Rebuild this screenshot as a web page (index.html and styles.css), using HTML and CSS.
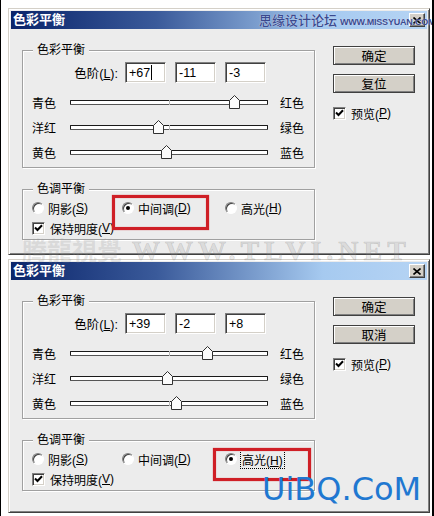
FILE: index.html
```html
<!DOCTYPE html>
<html lang="zh-CN">
<head>
<meta charset="utf-8">
<title>色彩平衡</title>
<link rel="stylesheet" href="styles.css">
</head>
<body>
<div class="page">
  <div class="dialog d1">
    <div class="titlebar">
      <span class="title">色彩平衡</span>
      <span class="close"><svg width="8" height="7" viewBox="0 0 8 7"><path d="M0.5 0.5L7.5 6.5M7.5 0.5L0.5 6.5" stroke="#000" stroke-width="1.6"/></svg></span>
    </div>
    <div class="body">
      <div class="left">
        <div class="group g-color">
          <span class="legend">色彩平衡</span>
          <div class="levels">
            <span class="lv-label">色阶(<u>L</u>):</span>
            <span class="field">+67<i class="caret"></i></span>
            <span class="field">-11</span>
            <span class="field">-3</span>
          </div>
          <div class="slider-row"><span class="sl-l">青色</span><div class="track"><svg class="thumb" style="left:83.5%" viewBox="0 0 11 14"><path d="M0.5 13.5V5.5L5.5 0.5L10.5 5.5V13.5Z" fill="#fbfbfb" stroke="#303030"/></svg></div><span class="sl-r">红色</span></div>
          <div class="slider-row"><span class="sl-l">洋红</span><div class="track"><svg class="thumb" style="left:44.5%" viewBox="0 0 11 14"><path d="M0.5 13.5V5.5L5.5 0.5L10.5 5.5V13.5Z" fill="#fbfbfb" stroke="#303030"/></svg></div><span class="sl-r">绿色</span></div>
          <div class="slider-row"><span class="sl-l">黄色</span><div class="track"><svg class="thumb" style="left:48.5%" viewBox="0 0 11 14"><path d="M0.5 13.5V5.5L5.5 0.5L10.5 5.5V13.5Z" fill="#fbfbfb" stroke="#303030"/></svg></div><span class="sl-r">蓝色</span></div>
        </div>
        <div class="group g-tone">
          <span class="legend">色调平衡</span>
          <div class="radios">
            <span class="radio"><span class="rb"></span>阴影(<u>S</u>)</span>
            <span class="radio on hl hl-1"><span class="rb"></span>中间调(<u>D</u>)</span>
            <span class="radio"><span class="rb"></span>高光(<u>H</u>)</span>
          </div>
          <span class="check"><span class="cb"><svg width="9" height="8" viewBox="0 0 9 8"><path d="M1 3.5L3.5 6L8 1.2" fill="none" stroke="#000" stroke-width="2"/></svg></span>保持明度(<u>V</u>)</span>
        </div>
      </div>
      <div class="right">
        <div class="btn">确定</div>
        <div class="btn">复位</div>
        <span class="check preview"><span class="cb"><svg width="9" height="8" viewBox="0 0 9 8"><path d="M1 3.5L3.5 6L8 1.2" fill="none" stroke="#000" stroke-width="2"/></svg></span>预览(<u>P</u>)</span>
      </div>
    </div>
  </div>

  <div class="dialog d2">
    <div class="titlebar">
      <span class="title">色彩平衡</span>
      <span class="close"><svg width="8" height="7" viewBox="0 0 8 7"><path d="M0.5 0.5L7.5 6.5M7.5 0.5L0.5 6.5" stroke="#000" stroke-width="1.6"/></svg></span>
    </div>
    <div class="body">
      <div class="left">
        <div class="group g-color">
          <span class="legend">色彩平衡</span>
          <div class="levels">
            <span class="lv-label">色阶(<u>L</u>):</span>
            <span class="field">+39</span>
            <span class="field">-2</span>
            <span class="field">+8</span>
          </div>
          <div class="slider-row"><span class="sl-l">青色</span><div class="track"><svg class="thumb" style="left:69.5%" viewBox="0 0 11 14"><path d="M0.5 13.5V5.5L5.5 0.5L10.5 5.5V13.5Z" fill="#fbfbfb" stroke="#303030"/></svg></div><span class="sl-r">红色</span></div>
          <div class="slider-row"><span class="sl-l">洋红</span><div class="track"><svg class="thumb" style="left:49%" viewBox="0 0 11 14"><path d="M0.5 13.5V5.5L5.5 0.5L10.5 5.5V13.5Z" fill="#fbfbfb" stroke="#303030"/></svg></div><span class="sl-r">绿色</span></div>
          <div class="slider-row"><span class="sl-l">黄色</span><div class="track"><svg class="thumb" style="left:54%" viewBox="0 0 11 14"><path d="M0.5 13.5V5.5L5.5 0.5L10.5 5.5V13.5Z" fill="#fbfbfb" stroke="#303030"/></svg></div><span class="sl-r">蓝色</span></div>
        </div>
        <div class="group g-tone">
          <span class="legend">色调平衡</span>
          <div class="radios">
            <span class="radio"><span class="rb"></span>阴影(<u>S</u>)</span>
            <span class="radio"><span class="rb"></span>中间调(<u>D</u>)</span>
            <span class="radio on hl hl-2"><span class="rb"></span><span class="focus">高光(<u>H</u>)</span></span>
          </div>
          <span class="check"><span class="cb"><svg width="9" height="8" viewBox="0 0 9 8"><path d="M1 3.5L3.5 6L8 1.2" fill="none" stroke="#000" stroke-width="2"/></svg></span>保持明度(<u>V</u>)</span>
        </div>
      </div>
      <div class="right">
        <div class="btn">确定</div>
        <div class="btn">取消</div>
        <span class="check preview"><span class="cb"><svg width="9" height="8" viewBox="0 0 9 8"><path d="M1 3.5L3.5 6L8 1.2" fill="none" stroke="#000" stroke-width="2"/></svg></span>预览(<u>P</u>)</span>
      </div>
    </div>
  </div>

  <div class="wm-title"><span class="wm-cn">思缘设计论坛</span><span class="wm-url">WWW.MISSYUAN.COM</span></div>
  <div class="wm-tlvi"><span class="wm-tl-cn">腾龍視覺</span><span class="wm-tl-url">WWW.TLVI.NET</span></div>
  <div class="wm-uibq">UiBQ.CoM</div>
</div>
</body>
</html>
```

FILE: styles.css
```css
* { box-sizing: border-box; }

body {
  margin: 0;
  background: #fff;
  font-family: "Liberation Sans", "Noto Sans CJK SC", sans-serif;
  font-size: 12px;
  color: #000;
}

u { text-decoration: underline; text-underline-offset: 1px; }

.page {
  position: relative;
  width: 434px;
  height: 516px;
  border-left: 1px solid #000;
  border-right: 2px solid #000;
  padding: 8px 0 0 7px;
  overflow: hidden;
}

.dialog {
  width: 422px;
  border: 1px solid;
  border-color: #d4d0c8 #404040 #404040 #d4d0c8;
  box-shadow: inset 1px 1px 0 #fff, inset -1px -1px 0 #808080;
  padding: 2px;
  background: #ececec;
}
.d1 { height: 247px; margin-bottom: 4px; }
.d2 { height: 254px; }

.titlebar {
  height: 18px;
  background: linear-gradient(to right, #0a246a 0%, #3a5a9a 35%, #a6caf0 75%, #b6d4f4 100%);
  display: flex;
  align-items: center;
  justify-content: space-between;
  padding: 0 2px;
  color: #fff;
  font-weight: bold;
  font-size: 13px;
}
.title { line-height: 18px; }

.close {
  width: 16px;
  height: 14px;
  background: #d4d0c8;
  border: 1px solid;
  border-color: #fff #404040 #404040 #fff;
  box-shadow: inset -1px -1px 0 #808080;
  display: flex;
  align-items: center;
  justify-content: center;
}

.body {
  display: flex;
  padding: 0 11px;
}

.left { width: 293px; padding-top: 21px; }
.right { width: 82px; margin-left: 18px; padding-top: 17px; display: flex; flex-direction: column; }

.group {
  position: relative;
  border: 1px solid #a0a0a0;
  box-shadow: 1px 1px 0 #fff, inset 1px 1px 0 #fff;
}
.legend {
  position: absolute;
  top: -8px;
  left: 10px;
  padding: 0 4px;
  line-height: 14px;
  background: #ececec;
}

.g-color { padding: 11px 9px 2px 9px; height: 118px; }
.g-tone { margin-top: 21px; padding: 8px 9px 2px 9px; height: 51px; }

.levels { display: flex; align-items: center; height: 21px; margin-bottom: 7px; }
.lv-label { width: 86px; text-align: right; margin-right: 7px; font-size: 12.5px; }
.field {
  width: 41px;
  height: 21px;
  margin-right: 9px;
  background: #fff;
  border: 1px solid;
  border-color: #808080 #fff #fff #808080;
  box-shadow: inset 1px 1px 0 #404040, inset -1px -1px 0 #d4d0c8;
  padding-left: 3px;
  display: flex;
  align-items: center;
  font-size: 12.5px;
}
.caret { display: inline-block; width: 1px; height: 15px; background: #000; margin-left: 1px; }

.slider-row { display: flex; align-items: center; height: 25px; }
.sl-l { width: 38px; }
.sl-r { margin-left: 12px; }
.track {
  position: relative;
  width: 198px;
  height: 5px;
  border: 1px solid #1a1a1a;
  border-bottom-color: #555;
  border-radius: 1px;
  background: #fff;
}
.track::before {
  content: "";
  position: absolute;
  left: 50%;
  top: -1px;
  width: 1px;
  height: 5px;
  background: #b8b8b8;
}
.thumb {
  position: absolute;
  top: -6px;
  width: 11px;
  height: 14px;
  margin-left: -5.5px;
}

.radios { display: grid; grid-template-columns: 90px 103px auto; height: 20px; align-items: center; }
.radio { position: relative; display: flex; align-items: center; }
.rb {
  position: relative;
  width: 12px;
  height: 12px;
  border-radius: 50%;
  border: 1px solid;
  border-color: #808080 #fff #fff #808080;
  box-shadow: inset 1px 1px 0 #404040;
  background: #fff;
  margin-right: 4px;
}
.radio.on .rb::after {
  content: "";
  position: absolute;
  left: 3px;
  top: 3px;
  width: 4px;
  height: 4px;
  border-radius: 50%;
  background: #000;
}
.hl::after {
  content: "";
  position: absolute;
  border: 3px solid #cf1f26;
  box-shadow: 0 0 1px rgba(200, 20, 30, 0.7), inset 0 0 1px rgba(200, 20, 30, 0.7);
}
.hl-1::after { left: -10px; top: -5px; width: 91px; height: 29px; }
.hl-2::after { left: -12px; top: -3px; width: 92px; height: 27px; }
.focus { outline: 1px dotted #000; outline-offset: 0; padding: 0 1px; }

.check { display: flex; align-items: center; height: 20px; }
.cb {
  width: 13px;
  height: 13px;
  border: 1px solid;
  border-color: #808080 #fff #fff #808080;
  box-shadow: inset 1px 1px 0 #404040, inset -1px -1px 0 #d4d0c8;
  background: #fff;
  margin-right: 5px;
  display: flex;
  align-items: center;
  justify-content: center;
}
.preview { margin-top: 1px; }

.btn {
  height: 19px;
  margin-bottom: 9px;
  background: #d4d0c8;
  border: 1px solid #404040;
  box-shadow: inset 1px 1px 0 #fff, inset -1px -1px 0 #808080;
  display: flex;
  align-items: center;
  justify-content: center;
  font-size: 12.5px;
}

.wm-title {
  position: absolute;
  left: 258px;
  top: 10px;
  display: flex;
  align-items: baseline;
  gap: 3px;
  color: #3b4a8e;
  text-shadow: 0 0 1px #e8f0ff;
  white-space: nowrap;
  z-index: 2;
}
.wm-cn { font-size: 13px; font-weight: 500; }
.wm-url { font-size: 9px; font-weight: bold; letter-spacing: -0.2px; }

.wm-tlvi {
  position: absolute;
  left: 21px;
  top: 239px;
  display: flex;
  align-items: baseline;
  gap: 10px;
  line-height: 20px;
  white-space: nowrap;
}
.wm-tl-cn {
  font-family: "Noto Sans CJK SC", sans-serif;
  font-size: 25px;
  font-weight: bold;
  color: rgba(150, 150, 150, 0.22);
}
.wm-tl-url {
  font-family: "Liberation Serif", serif;
  font-size: 28px;
  font-weight: bold;
  letter-spacing: 5px;
  color: rgba(150, 150, 150, 0.2);
  -webkit-text-stroke: 0.6px rgba(120, 120, 120, 0.3);
}

.wm-uibq {
  position: absolute;
  left: 261px;
  top: 474px;
  font-family: "DejaVu Sans", sans-serif;
  font-size: 32px;
  line-height: 31px;
  color: #1f78d1;
}
```
